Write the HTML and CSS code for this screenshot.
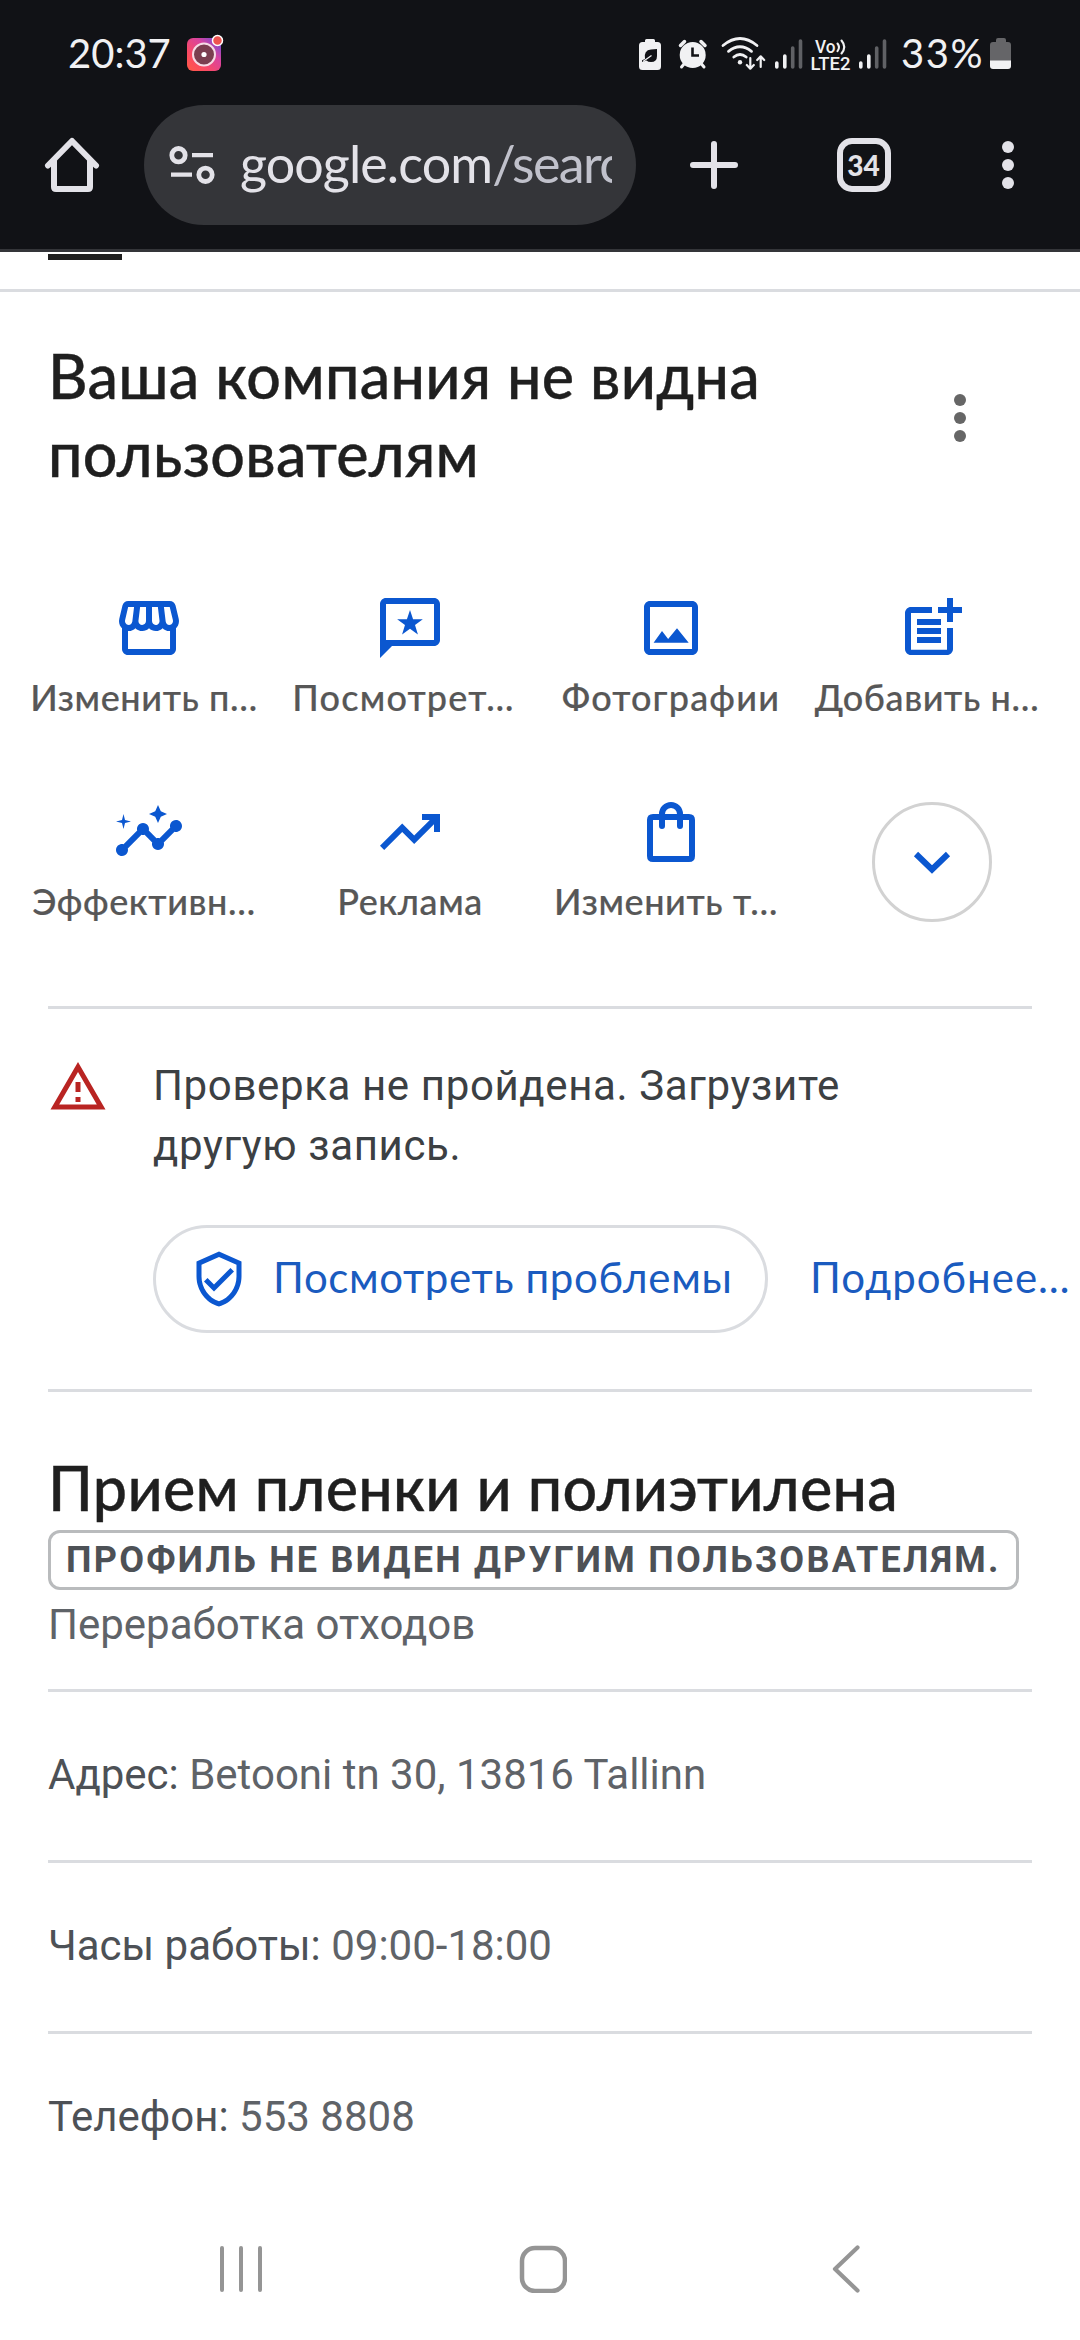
FILE: index.html
```
<!DOCTYPE html>
<html lang="ru">
<head>
<meta charset="utf-8">
<title>google.com/search</title>
<link rel="stylesheet" href="styles.css">
</head>
<body>
<div class="screen">
  <header class="chrome">
    <div class="status">
      <span class="clock">20:37</span>
      <svg class="app-badge" width="42" height="48" viewBox="185 29 42 48">
        <defs>
          <linearGradient id="ig" x1="0" y1="1" x2="1" y2="0">
            <stop offset="0" stop-color="#ff5a45"/><stop offset=".3" stop-color="#fb4a63"/><stop offset=".65" stop-color="#d8439f"/><stop offset="1" stop-color="#5b4fe0"/>
          </linearGradient>
        </defs>
        <rect x="187" y="38" width="34" height="33" rx="6" fill="url(#ig)"/>
        <circle cx="204" cy="54.5" r="11" fill="#7b3f50" stroke="#f6dce6" stroke-width="2"/>
        <circle cx="204" cy="54.5" r="2.6" fill="#fff"/>
        <circle cx="217.5" cy="40.5" r="5" fill="#ee5350" stroke="#fff" stroke-width="1.5"/>
      </svg>
      <div class="indicators">
        <svg width="26" height="48" viewBox="637 29 26 48">
          <path fill="#f1f1f3" d="M645 42v-1.500q0-1.500 1.500-1.500h7q1.500 0 1.500 1.500V42h2.500q3.500 0 3.500 3.500v21q0 3.500-3.500 3.500h-15q-3.500 0-3.500-3.500v-21q0-3.500 3.500-3.500z"/>
          <path fill="#111216" d="M657 49v7q0 6-6 6-3 0-4.500-1.500L642 62v-1.800l3-1.200q-1.500-9 6-9.500z"/>
          <path d="M643 61.500l8.500-6" stroke="#f1f1f3" stroke-width="1.300"/>
        </svg>
        <svg class="alarm" width="34" height="48" viewBox="676 29 34 48">
          <circle cx="692.700" cy="55" r="13" fill="#f1f1f3"/>
          <path d="M680.500 45.500l4-4M705 45.500l-4-4" stroke="#f1f1f3" stroke-width="3.500" stroke-linecap="round"/>
          <path d="M684 64l-2.500 3M701.500 64l2.500 3" stroke="#f1f1f3" stroke-width="3" stroke-linecap="round"/>
          <path d="M692.500 47.500V55.500H699" fill="none" stroke="#111216" stroke-width="2.600"/>
        </svg>
        <svg class="wifi" width="46" height="48" viewBox="720 29 46 48" fill="none" stroke="#f1f1f3" stroke-width="2.800" stroke-linecap="round" stroke-linejoin="round">
          <path d="M723 45.500q17-14 34 0M728.500 51.300q11.500-9 23 0M733.800 57q6.200-5 12.400 0"/>
          <circle cx="740" cy="62.300" r="2.200" fill="#f1f1f3" stroke="none"/>
          <path stroke-width="2.200" d="M750.300 58v10.500M746.800 65l3.500 3.700 3.500-3.700M760.700 67V56.500M757.200 60l3.500-3.700 3.500 3.700"/>
        </svg>
        <svg class="signal-a" width="29" height="48" viewBox="774 29 29 48" stroke-width="3.600" stroke-linecap="round">
          <path stroke="#f1f1f3" d="M776.800 63v4M784.800 56v11"/><path stroke="#606165" d="M792.700 48v19M800.500 41v26"/>
        </svg>
        <svg class="volte" width="42" height="48" viewBox="810 29 42 48">
          <text x="815" y="52.500" textLength="20.500" lengthAdjust="spacingAndGlyphs">Vo</text>
          <text x="810.500" y="69.500" textLength="40" lengthAdjust="spacingAndGlyphs">LTE2</text>
          <path d="M837.500 43.500q3 3.800 0 7.600M841.500 40.500q5.500 6.500 0 13" fill="none" stroke="#f1f1f3" stroke-width="2.100" stroke-linecap="round"/>
        </svg>
        <svg class="signal-b" width="29" height="48" viewBox="774 29 29 48" stroke-width="3.600" stroke-linecap="round">
          <path stroke="#f1f1f3" d="M776.800 63v4M784.800 56v11"/><path stroke="#606165" d="M792.700 48v19M800.500 41v26"/>
        </svg>
        <span class="percent">33%</span>
        <svg width="23" height="48" viewBox="989 29 23 48">
          <path fill="#656568" d="M996 42v-2q0-2 2-2h6q2 0 2 2v2h2q3 0 3 3v16h-21V45q0-3 3-3z"/>
          <path fill="#f1f1f3" d="M990 60.500h21V66q0 3-3 3h-15q-3 0-3-3z"/>
        </svg>
      </div>
    </div>
    <div class="toolbar">
      <svg width="56" height="56" viewBox="44 137 56 56" fill="none" stroke="#e3e2e8" stroke-width="6">
        <path d="M48 165.500L72 141l24 24.500" stroke-linecap="round" stroke-linejoin="round"/>
        <path d="M54 160v27q0 2 2 2h32q2 0 2-2v-27"/>
      </svg>
      <div class="omnibox">
        <svg width="46" height="40" viewBox="169 145 46 40" fill="none" stroke="#e3e2e8">
          <circle cx="178.500" cy="155.200" r="6.700" stroke-width="4.800"/><circle cx="205.500" cy="174.800" r="6.700" stroke-width="4.800"/>
          <path d="M192 155.200h21M171 174.700h21" stroke-width="4.200"/>
        </svg>
        <div class="url">google.com<span class="path">/searc</span></div>
      </div>
      <svg class="plus" width="50" height="50" viewBox="0 0 50 50"><path d="M25 4v42M4 25h42" stroke="#e3e2e8" stroke-width="6" stroke-linecap="round"/></svg>
      <div class="tabs">34</div>
      <svg class="menu" width="16" height="50" viewBox="0 0 16 50" fill="#e3e2e8"><circle cx="8" cy="7" r="6"/><circle cx="8" cy="25" r="6"/><circle cx="8" cy="43" r="6"/></svg>
    </div>
  </header>

  <div class="tabstrip"><div class="tab-active"></div></div>

  <main>
    <div class="heading">
      <h1>Ваша компания не видна<br>пользователям</h1>
      <svg width="16" height="50" viewBox="0 0 16 50" fill="#666"><circle cx="8" cy="7" r="6"/><circle cx="8" cy="25" r="6"/><circle cx="8" cy="43" r="6"/></svg>
    </div>

    <div class="actions">
      <div class="action">
        <svg viewBox="0 0 24 24"><path d="M21.900 8.890l-1.050-4.370c-.22-.9-1-1.520-1.910-1.520H5.050c-.9 0-1.690.63-1.900 1.520L2.100 8.890c-.24 1.020-.02 2.060.62 2.880.08.110.19.190.28.290V19c0 1.100.9 2 2 2h14c1.100 0 2-.9 2-2v-6.940c.09-.09.2-.18.28-.28.64-.82.87-1.870.62-2.890zm-2.990-3.900l1.050 4.370c.1.420.01.840-.25 1.170-.14.180-.44.470-.94.470-.61 0-1.140-.49-1.210-1.140L16.980 5l1.930-.01zM13 5h1.960l.54 4.520c.05.390-.07.780-.33 1.070-.22.260-.54.410-.95.410-.67 0-1.220-.59-1.220-1.310V5zM8.490 9.520L9.040 5H11v4.690c0 .72-.55 1.310-1.290 1.310-.34 0-.65-.15-.89-.41-.25-.29-.37-.68-.33-1.070zm-4.450-.16L5.050 5h1.970l-.58 4.860c-.08.650-.6 1.140-1.210 1.140-.49 0-.8-.29-.93-.47-.27-.32-.36-.75-.26-1.170zM5 19v-6.030c.08.010.15.030.23.030.87 0 1.660-.36 2.240-.95.6.6 1.400.95 2.310.95.87 0 1.650-.36 2.230-.93.59.57 1.390.93 2.290.93.84 0 1.640-.35 2.240-.95.58.59 1.370.95 2.240.95.08 0 .15-.02.23-.03V19H5z"/></svg>
        <span>Изменить п…</span>
      </div>
      <div class="action">
        <svg viewBox="0 0 24 24"><path d="M20 2H4c-1.100 0-2 .9-2 2v18l4-4h14c1.100 0 2-.9 2-2V4c0-1.100-.9-2-2-2zm0 14H4V4h16v12z"/><path d="M12 6l1.030 3.080 3.250.03-2.610 1.930.97 3.100L12 12.260l-2.640 1.880.97-3.100-2.610-1.930 3.250-.03z"/></svg>
        <span class="wide">Посмотрет…</span>
      </div>
      <div class="action">
        <svg viewBox="0 0 24 24"><path d="M19 5v14H5V5h14m0-2H5c-1.100 0-2 .9-2 2v14c0 1.100.9 2 2 2h14c1.100 0 2-.9 2-2V5c0-1.100-.9-2-2-2z"/><path d="M6.200 16.900L9 13l2.050 2.700L14 12.100l3.900 4.800z"/></svg>
        <span class="full wide">Фотографии</span>
      </div>
      <div class="action">
        <svg viewBox="0 0 24 24"><path d="M17 19.220H5V7h7V5H5c-1.100 0-2 .9-2 2v12c0 1.100.9 2 2 2h12c1.100 0 2-.9 2-2v-7h-2z"/><path d="M19 2h-2v3h-3v2h3v3h2V7h3V5h-3zM7 9h8v2H7zM7 12h8v2H7zM7 15h8v2H7z"/></svg>
        <span>Добавить н…</span>
      </div>
      <div class="action">
        <svg viewBox="0 0 24 24"><path d="M21 8c-1.450 0-2.260 1.440-1.930 2.510l-3.550 3.560c-.3-.09-.74-.09-1.040 0l-2.550-2.550C12.270 10.450 11.460 9 10 9c-1.450 0-2.270 1.440-1.930 2.520l-4.560 4.550C2.440 15.740 1 16.550 1 18c0 1.100.9 2 2 2 1.450 0 2.260-1.440 1.930-2.510l4.550-4.560c.3.090.74.090 1.040 0l2.550 2.550C12.730 16.550 13.540 18 15 18c1.450 0 2.270-1.440 1.930-2.520l3.560-3.550C21.560 12.260 23 11.450 23 10c0-1.100-.9-2-2-2z"/><path d="M15 9l.94-2.070L18 6l-2.060-.93L15 3l-.92 2.070L12 6l2.080.930zM3.500 11L4 9l2-.5L4 8l-.5-2L3 8l-2 .5L3 9z"/></svg>
        <span>Эффективн…</span>
      </div>
      <div class="action">
        <svg viewBox="0 0 24 24"><path d="M3.400 18L2 16.600l7.400-7.450 4 4L18.600 8H16V6h6v6h-2V9.400L13.400 16l-4-4z"/></svg>
        <span class="full">Реклама</span>
      </div>
      <div class="action">
        <svg viewBox="0 0 24 24"><path fill="none" stroke="#0b57d0" stroke-width="2" d="M6 7h12q1 0 1 1v12q0 1-1 1H6q-1 0-1-1V8q0-1 1-1z"/><path fill="none" stroke="#0b57d0" stroke-width="2" stroke-linecap="round" d="M9 10V6a3 3 0 0 1 6 0v4"/></svg>
        <span>Изменить т…</span>
      </div>
      <button class="expand">
        <svg width="40" height="26" viewBox="0 0 40 26"><path d="M4 5l16 15.500L36 5" fill="none" stroke="#0b57d0" stroke-width="6"/></svg>
      </button>
    </div>

    <section class="alert">
      <svg width="60" height="60" viewBox="0 0 24 24" fill="#b92422"><path d="M12 5.990L19.530 19H4.470L12 5.990M12 2L1 21h22L12 2zm1 14h-2v2h2v-2zm0-6h-2v4h2v-4z"/></svg>
      <div class="alert-body">
        <p>Проверка не пройдена. Загрузите<br>другую запись.</p>
        <div class="alert-actions">
          <a class="pill">
            <svg width="60" height="60" viewBox="0 0 24 24" fill="#0b57d0"><path d="M12 1L3 5v6c0 5.550 3.840 10.740 9 12 5.160-1.260 9-6.450 9-12V5l-9-4zm7 10c0 4.520-2.980 8.690-7 9.930-4.020-1.240-7-5.410-7-9.930V6.300l7-3.110 7 3.110V11zm-11.590.590L6 13l4 4 8-8-1.410-1.420L10 14.170z"/></svg>
            <span>Посмотреть проблемы</span>
          </a>
          <a class="more">Подробнее…</a>
        </div>
      </div>
    </section>

    <section class="profile">
      <h2>Прием пленки и полиэтилена</h2>
      <div class="tag">ПРОФИЛЬ НЕ ВИДЕН ДРУГИМ ПОЛЬЗОВАТЕЛЯМ.</div>
      <p class="category">Переработка отходов</p>
    </section>
    <div class="fact"><b>Адрес:</b> Betooni tn 30, 13816 Tallinn</div>
    <div class="fact"><b>Часы работы:</b> 09:00-18:00</div>
    <div class="fact last"><b>Телефон:</b> 553 8808</div>
  </main>

  <nav class="navbar">
    <svg width="46" height="48" viewBox="218 2245 46 48" stroke="#959595" stroke-width="4" stroke-linecap="round"><path d="M222 2248v42M241 2248v42M260 2248v42"/></svg>
    <svg class="nav-home" width="48" height="48" viewBox="519 2245 48 48"><rect x="522" y="2248" width="43" height="43" rx="13" fill="none" stroke="#959595" stroke-width="4.500"/></svg>
    <svg class="nav-back" width="30" height="52" viewBox="831 2243 30 52" fill="none" stroke="#959595" stroke-width="4.200" stroke-linecap="round" stroke-linejoin="round"><path d="M857.500 2247.500L835 2269l22.500 21.500"/></svg>
  </nav>
</div>
</body>
</html>
```
FILE: styles.css
```
* { box-sizing: border-box; }

body {
  margin: 0;
  background: #fff;
  font-family: Roboto, sans-serif;
}

.screen {
  display: flex;
  flex-direction: column;
  width: 1080px;
  height: 2340px;
  overflow: hidden;
}

svg { display: block; flex: none; }
h1, h2, p { margin: 0; }

/* Browser chrome */
.chrome {
  flex: none;
  height: 252px;
  background: #111216;
  border-bottom: 3px solid #343539;
}

.status {
  display: flex;
  height: 105px;
  padding: 29px 68px 0;
  font: 400 40px/49px Lato, sans-serif;
  color: #f1f1f3;
}

.clock { width: 103px; white-space: nowrap; }
.app-badge { margin-left: 14px; }
.indicators { display: flex; margin-left: auto; }
.alarm { margin-left: 13px; }
.wifi { margin-left: 10px; }
.signal-a { margin-left: 8px; }
.volte { margin-left: 7px; font: 500 17.500px Roboto, sans-serif; fill: #f1f1f3; }
.signal-b { margin-left: 6px; }
.percent { width: 84px; margin: 0 4px 0 14px; letter-spacing: 1.500px; white-space: nowrap; }

.toolbar {
  display: flex;
  align-items: center;
  height: 120px;
  padding-left: 44px;
}

.omnibox {
  display: flex;
  align-items: center;
  width: 492px;
  height: 120px;
  margin-left: 44px;
  padding: 0 24px 0 25px;
  border-radius: 60px;
  background: #343539;
}

.url {
  flex: 1;
  margin-left: 25px;
  padding-bottom: 4px;
  overflow: hidden;
  font: 400 52px/66px Lato, sans-serif;
  letter-spacing: -.9px;
  white-space: nowrap;
  color: #e3e2e8;
}

.path { color: #c0c1cb; letter-spacing: -1.6px; }
.plus { margin-left: 53px; }

.tabs {
  width: 54px;
  height: 54px;
  margin-left: 98px;
  border: 6px solid #e3e2e8;
  border-radius: 15px;
  font: 900 28px/42px Lato, sans-serif;
  text-align: center;
  text-indent: -1px;
  color: #e3e2e8;
}

.menu { margin-left: 109px; }

/* Page */
.tabstrip {
  flex: none;
  height: 40px;
  padding: 2px 48px 0;
  border-bottom: 3px solid #dadce0;
}

.tab-active { width: 74px; height: 6px; background: #1f1f1f; }

.heading {
  display: flex;
  align-items: center;
  justify-content: space-between;
  padding: 45px 112px 0 48px;
}

.heading svg { margin-top: 6px; }

h1, h2 {
  font: 500 61px/78px Lato, sans-serif;
  letter-spacing: .3px;
  color: #1f1f1f;
  -webkit-text-stroke: .4px #1f1f1f;
}

.actions {
  display: grid;
  grid-template-columns: repeat(4, 261px);
  row-gap: 75px;
  padding: 99px 0 81px 18px;
}

.action {
  display: flex;
  flex-direction: column;
  align-items: center;
  gap: 9px;
  height: 129px;
}

.action svg { width: 72px; height: 72px; fill: #0b57d0; }

.action span {
  min-width: 224px;
  margin-left: -9px;
  font: 500 36px/49px Lato, sans-serif;
  letter-spacing: .6px;
  text-align: center;
  white-space: nowrap;
  color: #575757;
  -webkit-text-stroke: .2px #575757;
}

.action .wide { margin-left: -12px; letter-spacing: 1.2px; }
.action .full { margin-left: 1px; }

.expand {
  display: flex;
  align-items: center;
  justify-content: center;
  justify-self: center;
  width: 120px;
  height: 120px;
  margin-top: 6px;
  padding: 0;
  border: 3px solid #d2d2d2;
  border-radius: 50%;
  background: none;
}

.alert {
  display: flex;
  margin: 0 48px;
  padding: 47px 0 56px;
  border-top: 3px solid #dadce0;
}

.alert > svg { margin-top: 1px; }
.alert-body { flex: 1; width: 0; margin-left: 45px; }

.alert p {
  font-size: 42px;
  line-height: 60px;
  letter-spacing: .63px;
  white-space: nowrap;
  color: #3c4043;
}

.alert-actions {
  display: flex;
  align-items: center;
  margin-top: 49px;
  font: 400 42px/60px Lato, sans-serif;
  letter-spacing: .65px;
  white-space: nowrap;
  color: #1a5bbf;
}

.pill {
  display: flex;
  flex: none;
  align-items: center;
  width: 615px;
  height: 108px;
  padding-left: 33px;
  border: 3px solid #dadce0;
  border-radius: 54px;
}

.pill span { margin-left: 24px; padding-bottom: 4px; }
.more { margin-left: 42px; padding-bottom: 4px; letter-spacing: 1px; }

.profile {
  margin: 0 48px;
  padding: 57px 0 34px;
  border-top: 3px solid #dadce0;
}

.tag {
  width: 971px;
  height: 60px;
  margin-top: 3px;
  padding-left: 15px;
  border: 3px solid #b9bbbd;
  border-radius: 12px;
  font-weight: 700;
  font-size: 36px;
  line-height: 54px;
  letter-spacing: 2.25px;
  white-space: nowrap;
  color: #4d5156;
}

.category {
  margin-top: 5px;
  font-size: 42px;
  line-height: 60px;
  color: #5f6368;
}

.fact {
  margin: 0 48px;
  padding: 53px 0 55px;
  border-top: 3px solid #dadce0;
  font-size: 42px;
  line-height: 60px;
  color: #5f6368;
}

.fact b { font-weight: 400; color: #4d5156; }
.fact.last { padding-bottom: 0; }

/* System navigation */
.navbar {
  display: flex;
  align-items: center;
  flex: none;
  height: 142px;
  margin-top: auto;
  padding-left: 218px;
}

.nav-home { margin-left: 255px; }
.nav-back { margin-left: 264px; }
```
